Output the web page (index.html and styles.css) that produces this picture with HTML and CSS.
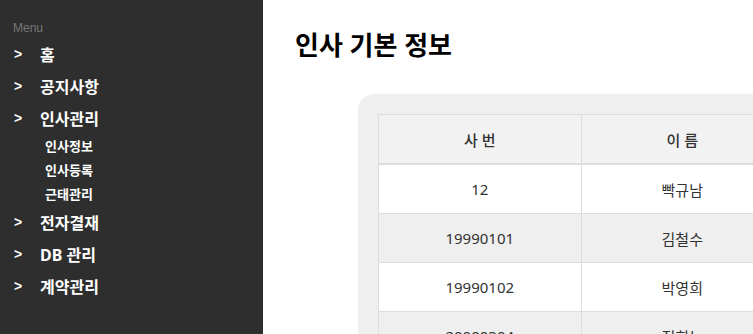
FILE: index.html
```html
<!DOCTYPE html>
<html lang="ko">
<head>
    <meta charset="UTF-8">
    <meta name="viewport" content="width=device-width, initial-scale=1.0">
    <title>인사 기본 정보</title>
    <link rel="stylesheet" href="styles.css">
</head>
<body>
    <nav class="sidebar">
        <div class="menu-label">Menu</div>
        <ul class="menu">
            <li class="menu-item"><span class="arrow">&gt;</span>홈</li>
            <li class="menu-item"><span class="arrow">&gt;</span>공지사항</li>
            <li class="menu-item"><span class="arrow">&gt;</span>인사관리</li>
            <li class="sub-item">인사정보</li>
            <li class="sub-item">인사등록</li>
            <li class="sub-item">근태관리</li>
            <li class="menu-item"><span class="arrow">&gt;</span>전자결재</li>
            <li class="menu-item"><span class="arrow">&gt;</span>DB 관리</li>
            <li class="menu-item"><span class="arrow">&gt;</span>계약관리</li>
        </ul>
    </nav>
    <main class="content">
        <h1 class="title">인사 기본 정보</h1>
        <div class="panel">
            <table class="emp-table">
                <thead>
                    <tr>
                        <th>사 번</th>
                        <th>이 름</th>
                    </tr>
                </thead>
                <tbody>
                    <tr><td>12</td><td>빡규남</td></tr>
                    <tr><td>19990101</td><td>김철수</td></tr>
                    <tr><td>19990102</td><td>박영희</td></tr>
                    <tr><td>20000304</td><td>정희누</td></tr>
                </tbody>
            </table>
        </div>
    </main>
</body>
</html>
```
FILE: styles.css
```css
body {
    margin: 0;
    padding: 0;
    display: flex;
    height: 100vh;
    overflow: hidden;
    font-family: 'Noto Sans', 'Noto Sans CJK KR', sans-serif;
    background-color: #fff;
}

.sidebar {
    width: 263px;
    flex-shrink: 0;
    background-color: #2e2e2e;
    color: #fff;
    padding-top: 20px;
    box-sizing: border-box;
}

.menu-label {
    font-family: 'Liberation Sans', Arial, sans-serif;
    font-size: 12px;
    color: #777;
    padding-left: 13px;
    line-height: 16px;
}

.menu {
    list-style: none;
    margin: 0;
    padding: 0;
}

.menu-item {
    display: flex;
    align-items: center;
    height: 32px;
    font-size: 16px;
    font-weight: bold;
    padding-left: 14px;
}

.menu-item:first-child {
    margin-top: 2px;
}

.arrow {
    width: 26px;
    font-family: 'Liberation Sans', Arial, sans-serif;
    font-size: 14px;
}

.sub-item {
    height: 24px;
    line-height: 24px;
    font-size: 13px;
    font-weight: bold;
    padding-left: 45px;
}

.content {
    flex: 1;
    padding-left: 32px;
    overflow: hidden;
}

.title {
    font-size: 26px;
    font-weight: bold;
    margin: 26px 0 0;
    line-height: 38px;
    color: #000;
}

.panel {
    margin: 30px 0 0 63px;
    background-color: #efefef;
    border-radius: 16px 0 0 0;
    padding: 20px 0 0 20px;
    width: 600px;
}

.emp-table {
    border-collapse: collapse;
    table-layout: fixed;
    width: 406px;
    background-color: #fff;
    color: #333;
    font-size: 15px;
}

.emp-table th,
.emp-table td {
    border: 1px solid #ddd;
    height: 48px;
    text-align: center;
    padding: 0;
}

.emp-table th {
    background-color: #f2f2f2;
    font-weight: 500;
    border-bottom: 2px solid #ddd;
}

.emp-table tbody tr:nth-child(even) {
    background-color: #efefef;
}
```
